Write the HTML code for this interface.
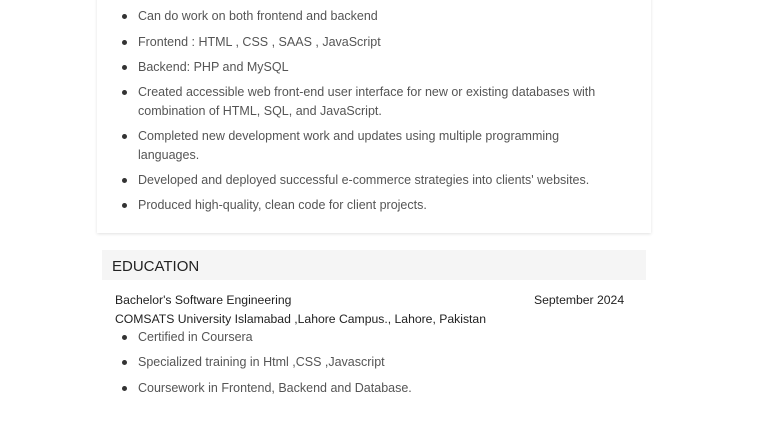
<!DOCTYPE html>
<html><head><style>
body{margin:0;width:762px;height:440px;background:#fff;font-family:"Liberation Sans",sans-serif;position:relative;overflow:hidden}
.card{position:absolute;left:97px;top:-10px;width:554px;height:243px;background:#fff;box-shadow:0 1px 3px rgba(0,0,0,0.12)}
.li{position:absolute;left:138px;font-size:12.5px;color:#555;line-height:19px;white-space:nowrap}
.li:before{content:"";position:absolute;left:-16px;top:7px;width:5px;height:5px;border-radius:50%;background:#333}
.hd{position:absolute;left:102px;top:250px;width:544px;height:30px;background:#f5f5f5}
.hd span{position:absolute;left:10px;top:8px;font-size:15px;color:#222}
.t{position:absolute;font-size:12.2px;color:#222;white-space:nowrap;line-height:16px}
</style></head><body>
<div class="card"></div>
<div class="li" style="top:7px">Can do work on both frontend and backend</div>
<div class="li" style="top:33px">Frontend : HTML , CSS , SAAS , JavaScript</div>
<div class="li" style="top:58px">Backend: PHP and MySQL</div>
<div class="li" style="top:83px">Created accessible web front-end user interface for new or existing databases with<br>combination of HTML, SQL, and JavaScript.</div>
<div class="li" style="top:127px">Completed new development work and updates using multiple programming<br>languages.</div>
<div class="li" style="top:171px">Developed and deployed successful e-commerce strategies into clients' websites.</div>
<div class="li" style="top:196px">Produced high-quality, clean code for client projects.</div>
<div class="hd"><span>EDUCATION</span></div>
<div class="t" style="left:115px;top:292px">Bachelor's Software Engineering</div>
<div class="t" style="left:534px;top:292px">September 2024</div>
<div class="t" style="left:115px;top:311px">COMSATS University Islamabad ,Lahore Campus., Lahore, Pakistan</div>
<div class="li" style="top:328px">Certified in Coursera</div>
<div class="li" style="top:353px">Specialized training in Html ,CSS ,Javascript</div>
<div class="li" style="top:379px">Coursework in Frontend, Backend and Database.</div>
</body></html>
